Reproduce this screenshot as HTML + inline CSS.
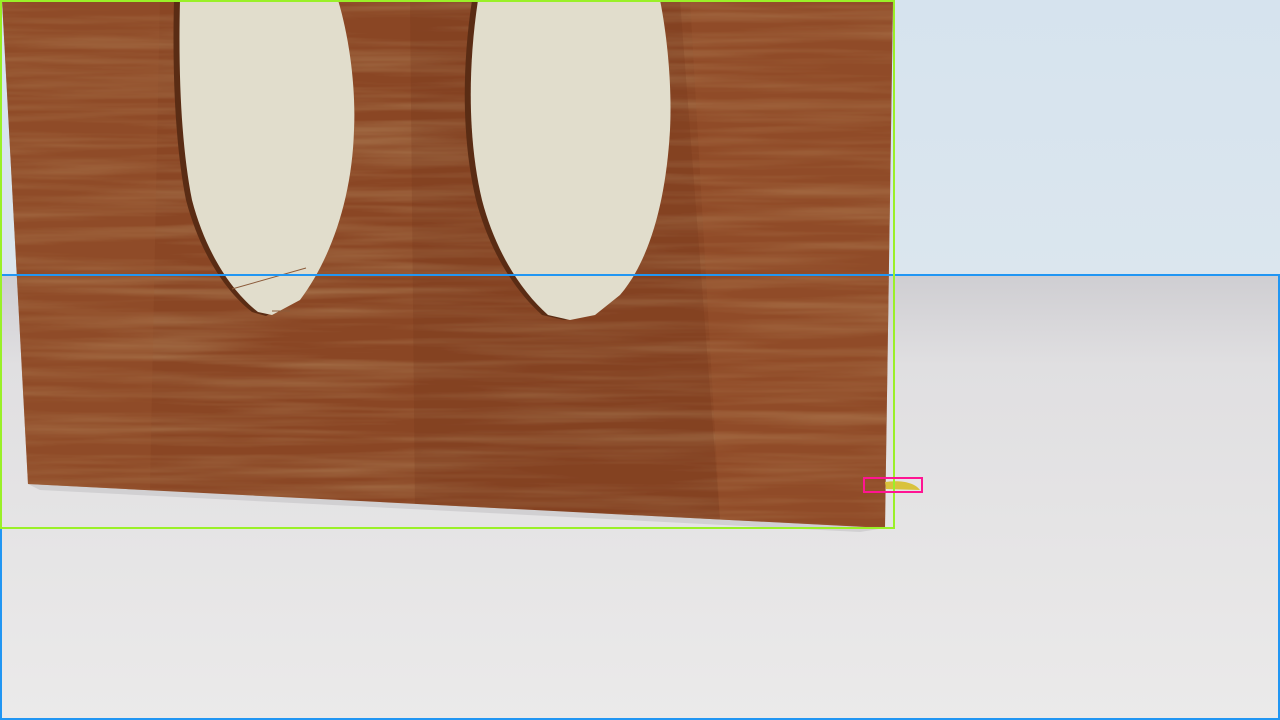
<!DOCTYPE html>
<html><head><meta charset="utf-8"><style>
html,body{margin:0;padding:0;width:1280px;height:720px;overflow:hidden;}
body{background:#e8e7e8;}
</style></head><body>
<svg width="1280" height="720" viewBox="0 0 1280 720" xmlns="http://www.w3.org/2000/svg" style="position:absolute;left:0;top:0">
<defs>
<linearGradient id="sky" x1="0" y1="0" x2="0" y2="1"><stop offset="0" stop-color="#d6e3ee"/><stop offset="1" stop-color="#dbe6ee"/></linearGradient>
<linearGradient id="floor" x1="0" y1="0" x2="0" y2="1"><stop offset="0" stop-color="#cfced2"/><stop offset="0.2" stop-color="#e0dfe1"/><stop offset="1" stop-color="#ebeaea"/></linearGradient>
<filter id="grain" x="0" y="0" width="100%" height="100%">
<feTurbulence type="fractalNoise" baseFrequency="0.004 0.09" numOctaves="3" seed="4"/>
<feColorMatrix type="matrix" values="0 0 0 0 0.38  0 0 0 0 0.17  0 0 0 0 0.07  0 0 0 1.6 -0.6"/>
</filter>
<clipPath id="board"><path d="M2,0 L893,0 L885,528 L28,484 Z"/></clipPath>
</defs>
<rect x="0" y="0" width="1280" height="276" fill="url(#sky)"/>
<rect x="0" y="276" width="1280" height="444" fill="url(#floor)"/>
<path d="M28,484 L885,528 L860,532 L40,490 Z" fill="#c9c8cb" opacity="0.7"/>
<path d="M2,0 L893,0 L885,528 L28,484 Z" fill="#8a4624"/>
<g clip-path="url(#board)">
<rect x="0" y="0" width="900" height="540" filter="url(#grain)"/>
<path d="M0,0 L160,0 L150,490 L0,490 Z" fill="#a05a33" opacity="0.25"/>
<path d="M410,0 L680,0 L720,520 L415,510 Z" fill="#6e3418" opacity="0.2"/>
<path d="M690,0 L893,0 L885,528 L720,520 Z" fill="#a35b33" opacity="0.25"/>
</g>
<path d="M174,0 L332,0 C344,40 350,90 348,130 C346,200 324,260 294,300 L266,316 L252,312 C224,290 199,250 186,200 C176,150 172,80 174,0 Z" fill="#5a2c14"/>
<path d="M180,0 L338,0 C350,40 356,90 354,130 C352,200 330,260 300,300 L272,315 L258,312 C230,290 205,250 192,200 C182,150 178,80 180,0 Z" fill="#e1ddcc"/>
<path d="M232,289 L306,268" stroke="#8a5a3a" stroke-width="1"/>
<path d="M272,311 L290,311" stroke="#8a5a3a" stroke-width="1"/>
<path d="M472,0 L654,0 C662,40 666,90 664,130 C660,200 644,260 614,295 L589,315 L564,320 L542,315 C514,290 489,250 476,200 C464,150 460,80 472,0 Z" fill="#5a2c14"/>
<path d="M478,0 L660,0 C668,40 672,90 670,130 C666,200 650,260 620,295 L595,315 L570,320 L548,315 C520,290 495,250 482,200 C470,150 466,80 478,0 Z" fill="#e1ddcc"/>
<path d="M885,482 C900,480 914,482 920,490 L886,489 Z" fill="#d9c23c"/>
<rect x="1" y="275" width="1278" height="444" fill="none" stroke="#2196f3" stroke-width="2"/>
<rect x="1" y="1" width="893" height="527" fill="none" stroke="#9af028" stroke-width="2"/>
<rect x="864" y="478" width="58" height="14" fill="none" stroke="#ff1493" stroke-width="2"/>
</svg>
</body></html>
